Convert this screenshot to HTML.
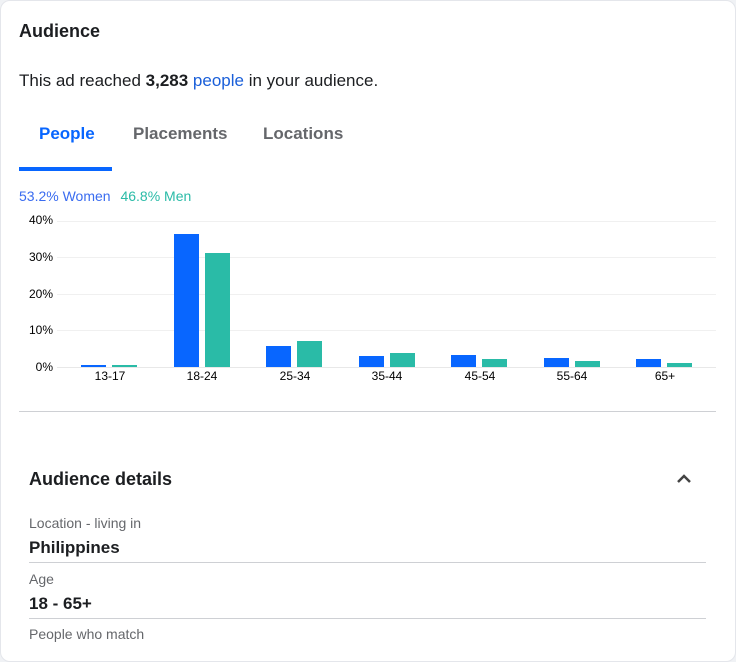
<!DOCTYPE html><html><head><style>
body{margin:0;background:#f0f2f5;font-family:"Liberation Sans",Arial,sans-serif;}
.card{position:absolute;left:0;top:0;width:734px;height:660px;background:#fff;border-radius:10px;border:1px solid #e4e6eb;}
.a{position:absolute;white-space:nowrap}
.bar{position:absolute;width:25px}
.w{background:#0866ff}.m{background:#2abba7}
.g{position:absolute;left:57px;width:659px;height:1px;background:#f0f0f0}
.yl{position:absolute;left:20px;width:33px;text-align:right;font-size:12px;color:#000}
.xl{position:absolute;width:60px;text-align:center;font-size:12px;color:#000;top:369px}
</style></head><body><div class="card"></div>
<div class="a" style="left:19px;top:21px;font-size:18px;font-weight:bold;color:#1c1e21">Audience</div>
<div class="a" style="left:19px;top:71px;font-size:17px;color:#1c1e21">This ad reached <b>3,283</b> <span style="color:#1a5fd9">people</span> in your audience.</div>
<div class="a" style="left:39px;top:124px;font-size:17px;font-weight:bold;color:#0866ff">People</div>
<div class="a" style="left:133px;top:124px;font-size:17px;font-weight:bold;color:#65676b">Placements</div>
<div class="a" style="left:263px;top:124px;font-size:17px;font-weight:bold;color:#65676b">Locations</div>
<div class="a" style="left:19px;top:167px;width:93px;height:4px;background:#0866ff"></div>
<div class="a" style="left:19px;top:188px;font-size:14px;color:#3a6cf0">53.2% Women <span style="color:#2abba7;margin-left:6px">46.8% Men</span></div>
<div class="g" style="top:221px"></div><div class="g" style="top:257px"></div><div class="g" style="top:294px"></div><div class="g" style="top:330px"></div><div class="g" style="top:367px;background:#e8e8e8"></div>
<div class="yl" style="top:213px">40%</div><div class="yl" style="top:250px">30%</div><div class="yl" style="top:287px">20%</div><div class="yl" style="top:323px">10%</div><div class="yl" style="top:360px">0%</div>
<div class="bar w" style="left:81px;top:365px;height:2px"></div><div class="bar m" style="left:112px;top:365px;height:2px"></div>
<div class="bar w" style="left:174px;top:234px;height:133px"></div><div class="bar m" style="left:205px;top:253px;height:114px"></div>
<div class="bar w" style="left:266px;top:346px;height:21px"></div><div class="bar m" style="left:297px;top:341px;height:26px"></div>
<div class="bar w" style="left:359px;top:356px;height:11px"></div><div class="bar m" style="left:390px;top:353px;height:14px"></div>
<div class="bar w" style="left:451px;top:355px;height:12px"></div><div class="bar m" style="left:482px;top:359px;height:8px"></div>
<div class="bar w" style="left:544px;top:358px;height:9px"></div><div class="bar m" style="left:575px;top:361px;height:6px"></div>
<div class="bar w" style="left:636px;top:359px;height:8px"></div><div class="bar m" style="left:667px;top:363px;height:4px"></div>
<div class="xl" style="left:80px">13-17</div><div class="xl" style="left:172px">18-24</div><div class="xl" style="left:265px">25-34</div><div class="xl" style="left:357px">35-44</div><div class="xl" style="left:450px">45-54</div><div class="xl" style="left:542px">55-64</div><div class="xl" style="left:635px">65+</div>
<div class="a" style="left:19px;top:411px;width:697px;height:1px;background:#ced0d4"></div>
<div class="a" style="left:29px;top:469px;font-size:18px;font-weight:bold;color:#1c1e21">Audience details</div>
<svg class="a" style="left:676px;top:473px" width="16" height="12"><path d="M2 9 L8 3 L14 9" stroke="#444" stroke-width="2.5" fill="none"/></svg>
<div class="a" style="left:29px;top:515px;font-size:14px;color:#65676b">Location - living in</div>
<div class="a" style="left:29px;top:538px;font-size:17px;font-weight:bold;color:#1c1e21">Philippines</div>
<div class="a" style="left:29px;top:562px;width:677px;height:1px;background:#ced0d4"></div>
<div class="a" style="left:29px;top:571px;font-size:14px;color:#65676b">Age</div>
<div class="a" style="left:29px;top:594px;font-size:17px;font-weight:bold;color:#1c1e21">18 - 65+</div>
<div class="a" style="left:29px;top:618px;width:677px;height:1px;background:#ced0d4"></div>
<div class="a" style="left:29px;top:626px;font-size:14px;color:#65676b">People who match</div>
</body></html>
